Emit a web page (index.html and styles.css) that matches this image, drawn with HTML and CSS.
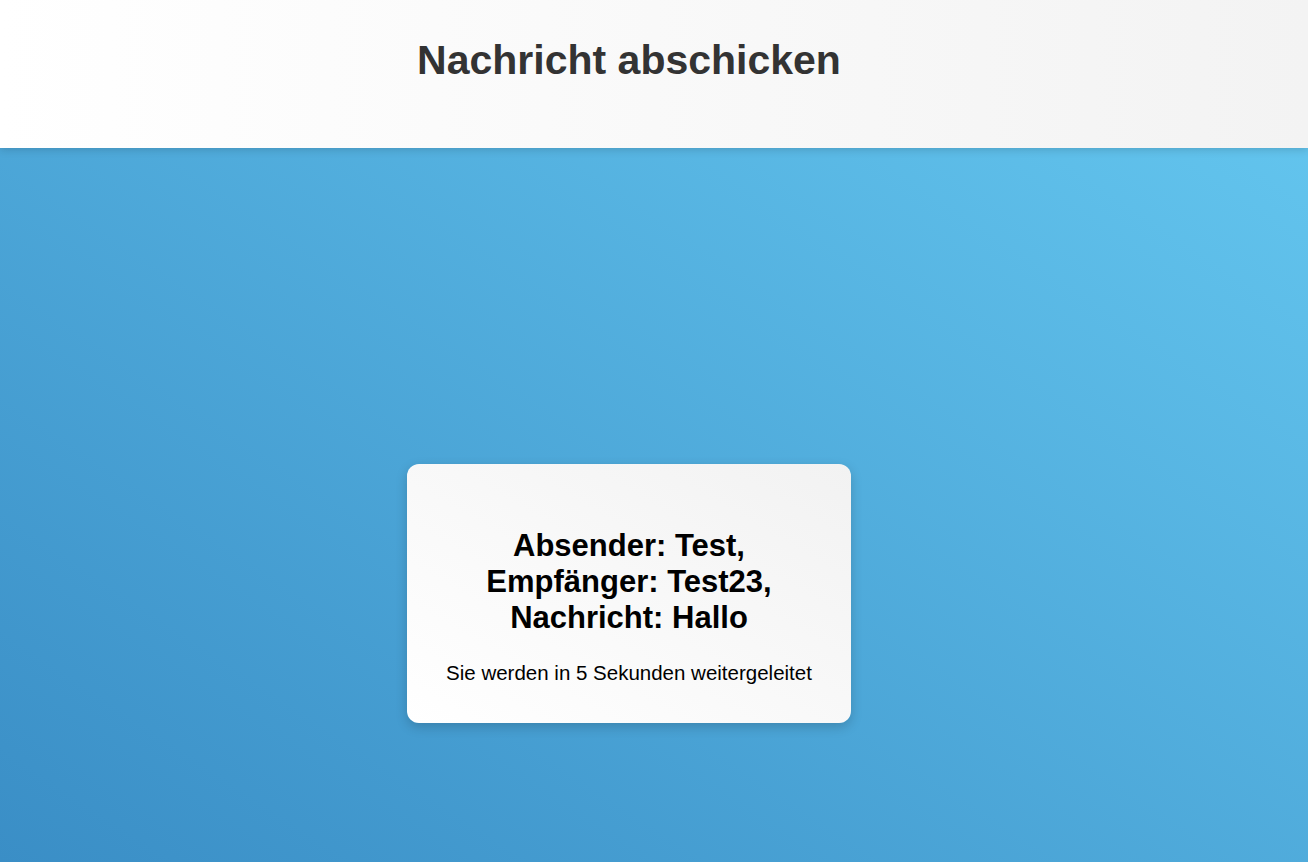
FILE: index.html
```html
<!DOCTYPE html>
<html lang="de">
<head>
<meta charset="utf-8">
<title>Nachricht abschicken</title>
<link rel="stylesheet" href="styles.css">
</head>
<body>
<header class="site-header">
  <h1 class="site-title">Nachricht abschicken</h1>
</header>
<main class="content">
  <section class="card">
    <h2 class="card-title">Absender: Test,<br>Empfänger: Test23,<br>Nachricht: Hallo</h2>
    <p class="card-note">Sie werden in 5 Sekunden weitergeleitet</p>
  </section>
</main>
</body>
</html>
```
FILE: styles.css
```css
* { box-sizing: border-box; }
html, body { margin: 0; height: 100%; }
body {
  font-family: "Liberation Sans", Arial, sans-serif;
  background: linear-gradient(to top right, #3a8ec6, #66c9f1);
  display: flex;
  flex-direction: column;
  min-height: 862px;
}
.site-header {
  height: 148px;
  background: linear-gradient(to right, #ffffff, #f3f3f3);
  box-shadow: 0 2px 8px rgba(0,0,0,0.15);
  display: flex;
  justify-content: center;
  padding-right: 50px;
  position: relative;
  z-index: 1;
}
.site-title {
  margin: 37px 0 0;
  font-size: 41px;
  font-weight: bold;
  color: #333333;
}
.content {
  flex: 1;
  display: flex;
  justify-content: center;
  padding: 316px 50px 0 0;
}
.card {
  width: 444px;
  height: 259px;
  border-radius: 12px;
  background: linear-gradient(to top right, #ffffff, #f2f2f2);
  box-shadow: 0 4px 12px rgba(0,0,0,0.18);
  text-align: center;
  padding: 64px 10px 0;
}
.card-title {
  margin: 0;
  font-size: 31px;
  line-height: 36px;
  font-weight: bold;
  color: #000;
}
.card-note {
  margin: 25px 0 0;
  font-size: 20.5px;
  color: #000;
}
```
